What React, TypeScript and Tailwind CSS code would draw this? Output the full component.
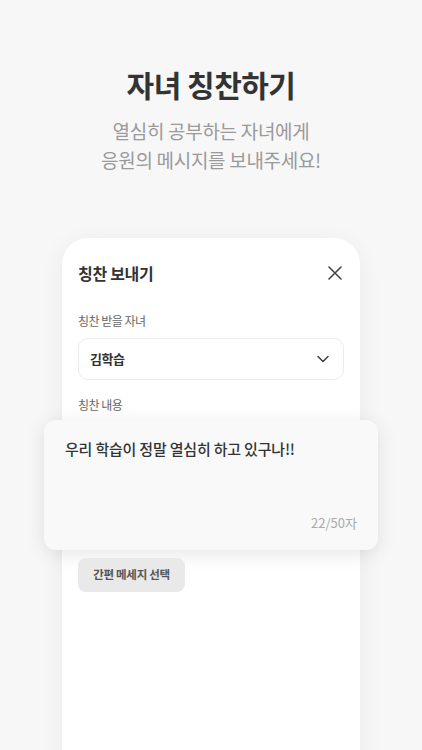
import React, { useState } from 'react';

const FONT = { fontFamily: '"Noto Sans CJK KR", "Noto Sans", sans-serif' };

function CloseIcon() {
  return (
    <svg className="w-[16px] h-[16px] text-[#444]" viewBox="0 0 16 16" fill="none" stroke="currentColor" strokeWidth="1.6" strokeLinecap="round">
      <path d="M2 2l12 12M14 2L2 14" />
    </svg>
  );
}

function ChevronIcon() {
  return (
    <svg className="w-[14px] h-[14px] text-[#444]" viewBox="0 0 14 14" fill="none" stroke="currentColor" strokeWidth="1.6" strokeLinecap="round" strokeLinejoin="round">
      <path d="M2 4.5l5 5 5-5" />
    </svg>
  );
}

export default function App() {
  const [message] = useState('우리 학습이 정말 열심히 하고 있구나!!');

  return (
    <div className="h-[750px] w-full overflow-hidden bg-[#f7f7f7] flex flex-col items-center" style={FONT}>
      {/* Intro */}
      <div className="pt-[63px] flex flex-col items-center">
        <h1 className="text-[30px] leading-[42px] font-bold text-[#333] tracking-[-0.5px]">자녀 칭찬하기</h1>
        <p className="mt-[11px] text-[19px] leading-[29px] text-[#9a9a9a] text-center tracking-[-0.3px]">
          열심히 공부하는 자녀에게
          <br />
          응원의 메시지를 보내주세요!
        </p>
      </div>

      {/* Card */}
      <div className="mt-[64px] w-[298px] min-h-[600px] bg-white rounded-[26px] shadow-[0_4px_24px_rgba(0,0,0,0.06)] px-4 pt-[24px] flex flex-col">
        <div className="flex items-center justify-between h-[22px]">
          <h2 className="text-[16px] font-bold text-[#333] tracking-[-0.3px]">칭찬 보내기</h2>
          <button className="w-[22px] h-[22px] flex items-center justify-center mr-[-2px]">
            <CloseIcon />
          </button>
        </div>

        <label className="mt-[28px] text-[12px] leading-[18px] text-[#666] tracking-[-0.5px]">칭찬 받을 자녀</label>
        <div className="mt-[8px] h-[42px] rounded-[10px] border border-[#ececec] flex items-center justify-between pl-[11px] pr-[13px]">
          <span className="text-[13px] font-bold text-[#333] tracking-[-0.5px]">김학습</span>
          <ChevronIcon />
        </div>

        <label className="mt-[16px] text-[12px] leading-[18px] text-[#666] tracking-[-0.5px]">칭찬 내용</label>
        <div className="mt-[6px] -mx-[34px] h-[130px] rounded-[12px] bg-[#f9f9f9] shadow-[0_4px_20px_rgba(0,0,0,0.1)] px-[21px] pt-[17px] pb-[18px] flex flex-col justify-between">
          <p className="text-[15px] leading-[24px] font-medium text-[#333] tracking-[-0.2px]">{message}</p>
          <span className="self-end text-[13px] leading-[18px] text-[#aaa]">{message.length}/50자</span>
        </div>

        <button className="mt-[8px] self-start h-[34px] w-[107px] rounded-lg bg-[#e9e9e9] text-[11.5px] font-bold text-[#555] tracking-[-0.3px]">
          간편 메세지 선택
        </button>
      </div>
    </div>
  );
}
